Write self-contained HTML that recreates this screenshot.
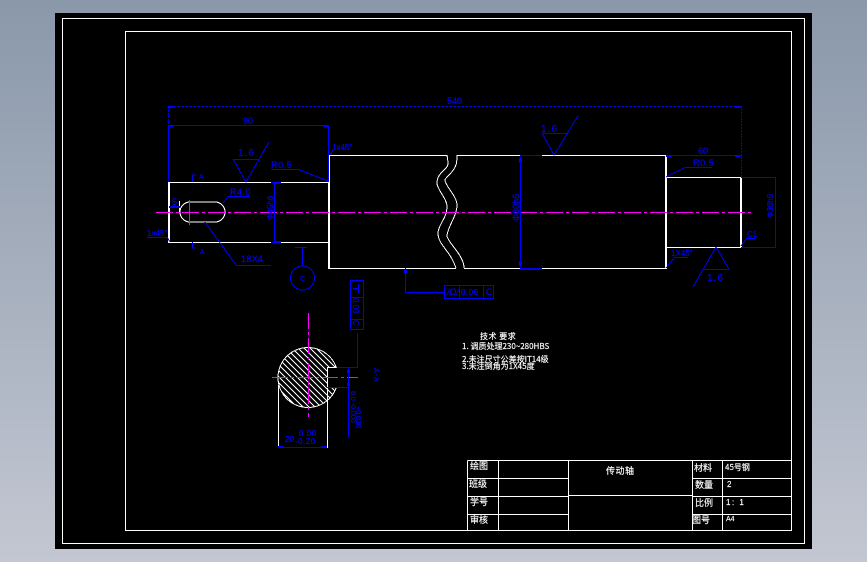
<!DOCTYPE html>
<html>
<head>
<meta charset="utf-8">
<style>
html,body{margin:0;padding:0;width:867px;height:562px;overflow:hidden;background:linear-gradient(#8a98aa 0,#c3c7d2 562px)}
svg{position:absolute;left:0;top:0;display:block}
text{font-family:"Liberation Sans","Noto Sans CJK SC",sans-serif}
.b{fill:#00f;font-size:9px;stroke:#00f;stroke-width:.15}
.w{fill:#fff;font-size:9px;stroke:#fff;stroke-width:.15}
.cjk{font-family:"WenQuanYi Zen Hei","Noto Sans CJK SC",sans-serif}
</style>
</head>
<body>
<svg width="867" height="562" viewBox="0 0 867 562" xmlns="http://www.w3.org/2000/svg" shape-rendering="crispEdges">
<defs>
<clipPath id="sec"><path d="M336.300 367.500A30 30 0 1 0 336.300 387.500H327.500V367.500Z"/></clipPath>
</defs>
<rect x="55" y="13" width="757" height="536" fill="#000"/>
<g fill="none" stroke="#fff" stroke-width="1">
<rect x="62.500" y="18.500" width="742" height="525"/>
<rect x="125.500" y="31.500" width="666" height="499"/>
<path d="M467.500 460.500H791M467.500 530.500V460.500M498.500 460.500V530.500M568.500 460.500V530.500M692.500 460.500V530.500M722.500 460.500V530.500M467.500 478.500H568M467.500 496.500H568M467.500 514.500H568M568.500 495.500H692M692.500 478.500H791M692.500 496.500H791M692.500 514.500H791"/>
</g>
<g fill="none" stroke="#fff">
<path d="M169.500 182.500H329M169.500 242.500H329M329.500 155.500H447M329.500 268.500H456M457 155.500H666M464 268.500H666M666 177.500H741M666 247.500H741" stroke-width="1"/>
<path d="M329 155V269M666 155V269M741 177V248M169 182V243" stroke-width="2"/>
<path d="M278.500 385V447M327.500 388V448" stroke-width="1"/>
<path d="M179.500 201V212" stroke-width="1"/>
<path d="M447 155C448 162 449 165 446 168C441 173 437 176 437 183C437 190 447 198 447 207C447 218 438 225 438 233C438 245 450 250 456 268"/>
<path d="M457 155C457 163 456 166 454 169C451 174 445 178 445 180C445 186 457 196 457 205C457 216 447 228 447 236C448 243 464 255 464 268"/>
<rect x="180" y="202" width="45" height="20" rx="10" ry="10"/>
</g>
<g clip-path="url(#sec)" stroke="#fff" stroke-width="1.300">
<path d="M268 294L348 374M268 300L348 380M268 306L348 386M268 312L348 392M268 318L348 398M268 324L348 404M268 330L348 410M268 336L348 416M268 342L348 422M268 348L348 428M268 354L348 434M268 360L348 440M268 366L348 446M268 372L348 452M268 378L348 458"/>
</g>
<path d="M336.300 367.500A30 30 0 1 0 336.300 387.500H327.500V367.500Z" fill="none" stroke="#fff"/>
<g fill="none" stroke="#f0f" stroke-width="1">
<path d="M156 212.500H754" stroke-dasharray="17 3 3 3"/>
<path d="M189.500 200V225"/>
<path d="M272 377.500H358" stroke-dasharray="16 3 3 3"/>
<path d="M308.500 313V417" stroke-dasharray="16 3 3 3"/>
</g>
<g fill="none" stroke="#00f" stroke-width="1">
<path d="M169 106.500H741" stroke-dasharray="3 1"/>
<path d="M168.500 107V125M741.500 106V177" stroke-dasharray="2 1"/>
<path d="M169 125.500H329M168.500 125V182M328.500 125V182"/>
<path d="M274.500 182V242M271 182.500H281M271 242.500H281"/>
<path d="M520.500 155V268M520 155.500H542M520 268.500H542"/>
<path d="M666 155.500H741M741 177.500H775.500M741 247.500H775.500M775.500 177V248"/>
<path d="M405.500 268V292.500H444M444.500 285.500H493.500V298.500H444.500ZM459.500 286V298M483.500 286V298"/>
<path d="M350.500 280.500H363.500V329.500H350.500ZM351 297.500H363M351 319.500H363M357.500 333V367.500H337M348.500 367V438M327 387.500H348M278 447.500H327"/>
<path d="M192.500 182V175H196M192.500 242V248H196"/>
<path d="M169 207.500H180M271 169.500H297M229 196.500H249M236 265.500H271M686 167.500H712M675 257.500H688M747 238.500H755M147 237.500H167M295 247.500H307M302.500 247V266M233 159.500H259M542 133.500H568M704 269.500H729"/>
<path d="M233 159L246 182L269 142M542 133L554 155L578 116M729 269L716 247L693 287M297 169L328 181M229 196L223 203M236 265L205 222M686 167L666 177M675 257L666 268M747 238L741 246M167 237L170 242M330 155L333 150"/>
<circle cx="302.500" cy="278" r="12"/>
<path d="M353 288.500H358M358.500 284V293"/>
</g>
<g fill="#00f">
<rect x="168" y="125" width="6" height="2"/><rect x="323" y="125" width="6" height="2"/>
<rect x="168" y="106" width="6" height="2"/><rect x="735" y="106" width="6" height="2"/>
<rect x="666" y="155" width="6" height="2"/><rect x="735" y="155" width="6" height="2"/>
<rect x="274" y="182" width="7" height="2"/><rect x="274" y="241" width="7" height="2"/>
<rect x="520" y="268" width="22" height="2"/>
<rect x="169" y="206" width="11" height="2"/>
<rect x="519" y="158" width="3" height="5"/><rect x="519" y="261" width="3" height="5"/>
<rect x="404" y="270" width="3" height="3"/><rect x="347" y="370" width="3" height="3"/><rect x="347" y="383" width="3" height="3"/>
<rect x="278" y="446" width="6" height="2"/><rect x="321" y="446" width="6" height="2"/>
</g>
<text class="b" x="243" y="124">90</text>
<text class="b" x="447" y="104">540</text>
<text class="b" x="698" y="154">60</text>
<text class="b" x="238" y="156" style="font-size:10px;letter-spacing:1px">1.6</text>
<text class="b" x="541" y="132" style="font-size:10px;letter-spacing:1px">1.6</text>
<text class="b" x="707" y="281" style="font-size:10px;letter-spacing:1px">1.6</text>
<text class="b" x="271" y="168" style="letter-spacing:.6px">R0.5</text>
<text class="b" x="693" y="166" style="letter-spacing:.6px">R0.5</text>
<text class="b" x="230" y="195" style="letter-spacing:.4px">R4.0</text>
<text class="b" x="241" y="262" style="letter-spacing:.3px">18X4</text>
<text class="b" x="332" y="150" style="font-size:8px">1x45°</text>
<text class="b" x="147" y="236" style="font-size:8px">1x45°</text>
<text class="b" x="671" y="256" style="font-size:8px">1X45°</text>
<text class="b" x="747" y="237" style="font-size:8px">C1</text>
<text class="b" x="172" y="205">5</text>
<text class="b" x="199" y="179" style="font-size:7px">A</text>
<text class="b" x="200" y="254" style="font-size:7px">A</text>
<text class="b" x="300" y="281" style="font-size:7px">C</text>
<text class="b" x="461" y="295" style="font-size:8px;letter-spacing:.5px">0.06</text>
<text class="b" x="486" y="295" style="font-size:9px">C</text>
<text class="b" x="447" y="295" style="font-size:9px;font-style:italic">/Ω/</text>
<text class="b" transform="translate(273 220) rotate(-90)" style="font-size:8px">Φ45h6</text>
<text class="b" transform="translate(519 221) rotate(-90)" style="font-size:9px">Φ80h6</text>
<text class="b" transform="translate(773 218) rotate(-90)" style="font-size:8px">Φ38h6</text>
<text class="b" transform="translate(353 298) rotate(90)" style="font-size:8px">0.03</text>
<text class="b" transform="translate(353 320) rotate(90)" style="font-size:8px">C</text>
<text class="b" transform="translate(351 391) rotate(90)" style="font-size:7px">8.0 -0.000</text>
<text class="b" transform="translate(356 406) rotate(90)" style="font-size:7px">+0.030</text>
<text class="b" transform="translate(374 368) rotate(90)" style="font-size:7px;letter-spacing:1px">A-A</text>
<text class="b" x="285" y="442" style="font-size:8px">20</text>
<text class="b" x="299" y="436" style="font-size:8px;letter-spacing:.5px">0.00</text>
<text class="b" x="295" y="444" style="font-size:8px;letter-spacing:.5px">-0.20</text>
<text class="w cjk" x="480" y="339" style="font-size:8px;letter-spacing:.5px">技术 要求</text>
<text class="w cjk" x="462" y="349" style="font-size:8px">1. 调质处理230~280HBS</text>
<text class="w cjk" x="462" y="362" style="font-size:8px">2.未注尺寸公差按IT14级</text>
<text class="w cjk" x="462" y="369" style="font-size:8px">3.未注倒角为1X45度</text>
<text class="w cjk" x="470" y="469" style="font-size:9px">绘图</text>
<text class="w cjk" x="469" y="487" style="font-size:9px">班级</text>
<text class="w cjk" x="470" y="505" style="font-size:9px">学号</text>
<text class="w cjk" x="470" y="523" style="font-size:9px">审核</text>
<text class="w cjk" x="606" y="474" style="font-size:9px;letter-spacing:.5px">传动轴</text>
<text class="w cjk" x="694" y="471" style="font-size:9px">材料</text>
<text class="w cjk" x="695" y="488" style="font-size:9px">数量</text>
<text class="w cjk" x="695" y="506" style="font-size:9px">比例</text>
<text class="w cjk" x="692" y="523" style="font-size:9px">图号</text>
<text class="w cjk" x="725" y="470" style="font-size:8px">45号钢</text>
<text class="w" x="727" y="487" style="font-size:8px">2</text>
<text class="w" x="726" y="505" style="font-size:8px;letter-spacing:1.500px">1: 1</text>
<text class="w" x="726" y="521" style="font-size:7px">A4</text>
</svg>
</body>
</html>
